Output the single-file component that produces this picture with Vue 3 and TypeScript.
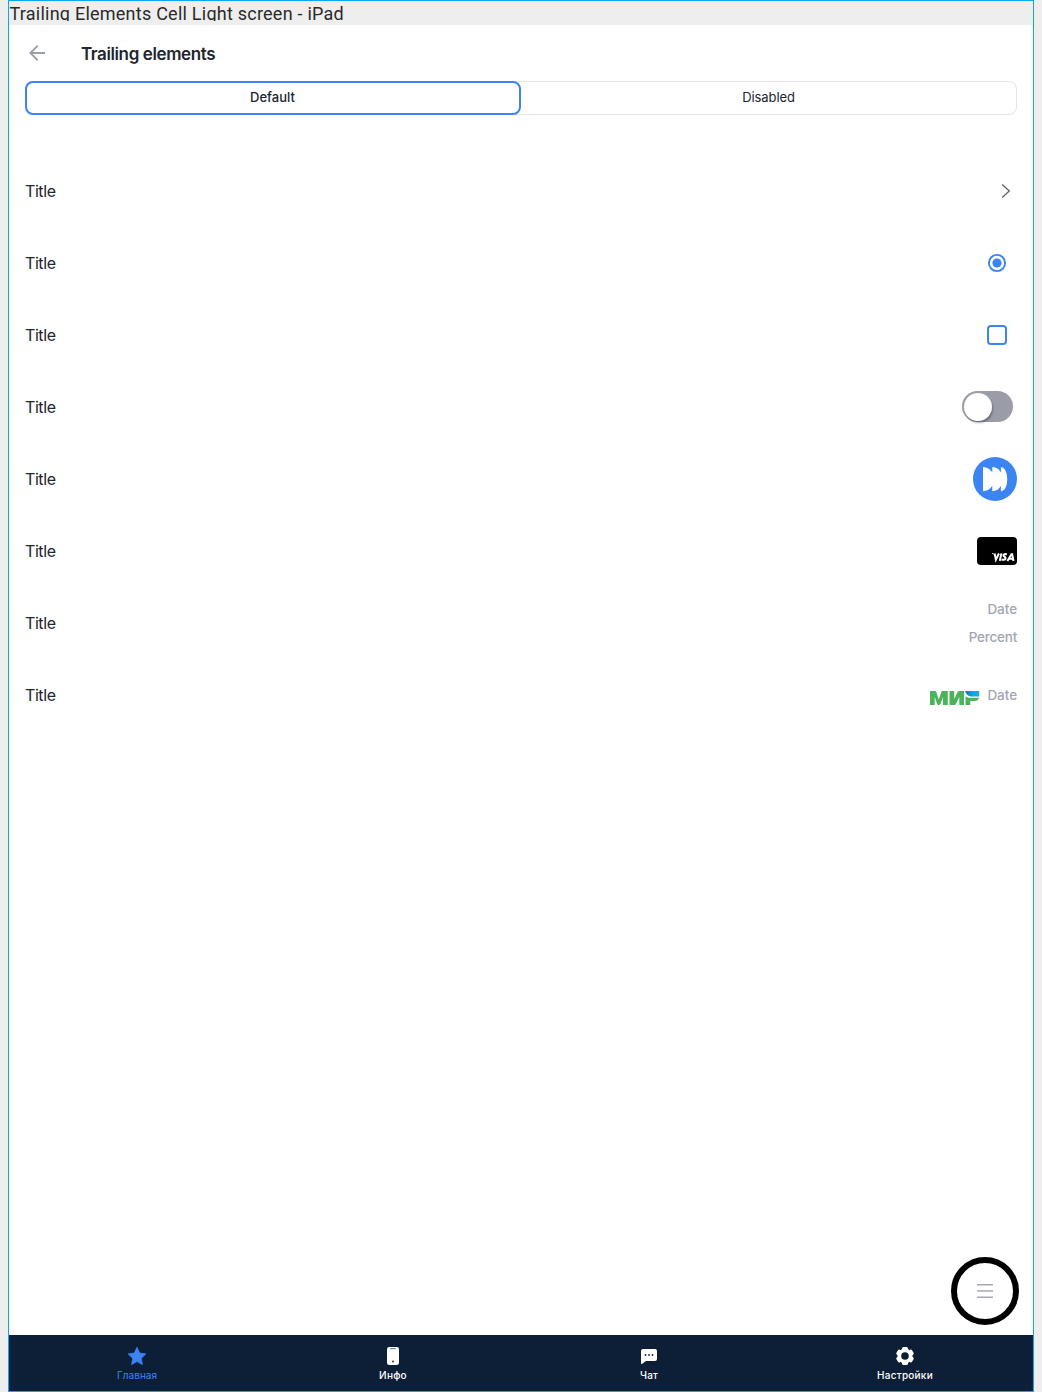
<script setup lang="ts">
type Trailing = 'chevron' | 'radio' | 'checkbox' | 'switch' | 'avatar' | 'visa' | 'labels' | 'mir'

const rows: Trailing[] = ['chevron', 'radio', 'checkbox', 'switch', 'avatar', 'visa', 'labels', 'mir']

const tabs = [
  { id: 'home', label: 'Главная' },
  { id: 'info', label: 'Инфо' },
  { id: 'chat', label: 'Чат' },
  { id: 'settings', label: 'Настройки' },
]

const teeth = [0, 60, 120, 180, 240, 300]
</script>

<template>
  <div class="canvas">
    <div class="frame">
      <div class="caption"><span>Trailing Elements Cell Light screen - iPad</span></div>

      <header class="header">
        <svg class="back" width="24" height="24" viewBox="0 0 24 24">
          <path d="M20 12H5.500M12.700 4.700L5.400 12l7.300 7.300" fill="none" stroke="#9b9eab" stroke-width="1.900" />
        </svg>
        <h1>Trailing elements</h1>
      </header>

      <div class="segmented">
        <button class="segment active">Default</button>
        <button class="segment">Disabled</button>
      </div>

      <main class="list">
        <div v-for="kind in rows" :key="kind" class="row">
          <span class="title">Title</span>

          <svg v-if="kind === 'chevron'" class="chevron" width="10" height="16" viewBox="0 0 10 16">
            <path d="M1.200 1.500L8.300 8l-7.100 6.500" fill="none" stroke="#5d5f6e" stroke-width="1.300" />
          </svg>

          <svg v-else-if="kind === 'radio'" class="radio" width="20" height="20" viewBox="0 0 20 20">
            <circle cx="10" cy="10" r="8.100" fill="none" stroke="#3b84f1" stroke-width="1.900" />
            <circle cx="10" cy="10" r="4.600" fill="#3b84f1" />
          </svg>

          <span v-else-if="kind === 'checkbox'" class="checkbox"></span>

          <span v-else-if="kind === 'switch'" class="switch"><i></i></span>

          <svg v-else-if="kind === 'avatar'" width="44" height="44" viewBox="0 0 44 44">
            <circle cx="22" cy="22" r="22" fill="#3b84f1" />
            <path
              d="M10 10c4 .3 7.300 2 9.300 5.500V10c4 .3 6.800 2 8.600 5.500V10c4.300 .4 6.300 6 6.300 12.200s-2 11.600-6.300 12.100v-5.500c-1.800 3.500-4.600 5.200-8.600 5.500v-5.500c-2 3.500-5.300 5.200-9.300 5.500z"
              fill="#fff"
            />
          </svg>

          <svg v-else-if="kind === 'visa'" width="40" height="28" viewBox="0 0 40 28">
            <rect width="40" height="28" rx="4" fill="#000" />
            <path d="M15 16.400c1 .1 1.800.5 2.300 1.200" fill="none" stroke="#fff" stroke-width="0.800" />
            <g fill="none" stroke="#fff" stroke-width="2">
              <path d="M17.600 16.500l1.300 6.200 3-6.200" />
              <path d="M24.400 16.400l-1.600 7.500" />
              <path d="M29.800 17.500c-1.500-.7-3.400-.4-3.400.8 0 1.400 2.500 1.400 2.200 3.100-.2 1.600-2.500 1.800-4 1" />
              <path d="M30.400 24l4-6.700h.8l1.300 6.700M32.200 21.700h3.700" />
            </g>
          </svg>

          <span v-else-if="kind === 'labels'" class="labels">
            <span>Date</span>
            <span class="percent">Percent</span>
          </span>

          <span v-else class="payment">
            <svg width="50" height="14" viewBox="0 0 50 14">
              <defs>
                <linearGradient id="mir-blue" x1="0" x2="1">
                  <stop offset="0" stop-color="#0c78c2" />
                  <stop offset="0.600" stop-color="#10a9e2" />
                </linearGradient>
              </defs>
              <g fill="#4bb35a">
                <path d="M0 14V0h4.600c.9 0 1.400.4 1.700 1.200L8.800 8.500l2.500-7.300C11.600.4 12.100 0 13 0h4.800v14h-4.800V6l-2.500 6.800c-.3.800-.8 1.200-1.700 1.200s-1.400-.4-1.700-1.200L4.700 6v8z" />
                <path d="M19.500 0h4.700v8l3.300-6.800C27.900.4 28.500 0 29.400 0H34v14h-4.700V6L26 12.800c-.4.800-1 1.200-1.900 1.200h-4.600z" />
                <path d="M35.500 5.200c1 .9 2.600 1.500 4.500 1.500h9.100c-.5 2-2.200 3.300-4.400 3.300h-4.400v4h-4.800z" />
              </g>
              <path d="M35.200 0H49.200V5.600H42.200C38.600 5.600 35.700 3.400 35.200 0z" fill="url(#mir-blue)" />
            </svg>
            <span class="date">Date</span>
          </span>
        </div>
      </main>

      <button class="fab" aria-label="Menu">
        <svg width="16" height="14" viewBox="0 0 16 14">
          <path d="M0 .75h16M0 7h16M0 13.250h16" stroke="#a5a8b3" stroke-width="1.300" />
        </svg>
      </button>

      <nav class="tabbar">
        <a v-for="tab in tabs" :key="tab.id" class="tab" :class="{ current: tab.id === 'home' }">
          <svg width="24" height="24" viewBox="0 0 24 24" fill="currentColor">
            <path
              v-if="tab.id === 'home'"
              d="M12 3.300l2.700 5.800 6.100.8-4.500 4.400 1.100 6.200L12 17.500l-5.400 3 1.100-6.200-4.500-4.400 6.100-.8z"
              stroke="currentColor"
              stroke-width="0.800"
              stroke-linejoin="round"
            />
            <template v-else-if="tab.id === 'info'">
              <rect x="6" y="3" width="12" height="18" rx="2.300" />
              <rect x="9" y="4" width="6" height="1.300" rx="0.600" fill="#7f8998" />
              <circle cx="12" cy="17.500" r="0.900" fill="#0d1f37" />
            </template>
            <template v-else-if="tab.id === 'chat'">
              <path d="M6 5h12a2 2 0 0 1 2 2v8a2 2 0 0 1-2 2H9.200C7.500 17 6.600 20 4 20V7a2 2 0 0 1 2-2z" />
              <g fill="#0d1f37">
                <circle cx="8.500" cy="11" r="0.900" />
                <circle cx="12" cy="11" r="0.900" />
                <circle cx="15.500" cy="11" r="0.900" />
              </g>
            </template>
            <template v-else>
              <circle cx="12" cy="12" r="5.700" fill="none" stroke="currentColor" stroke-width="3.800" />
              <rect
                v-for="angle in teeth"
                :key="angle"
                x="9"
                y="3"
                width="6"
                height="4"
                rx="1.500"
                :transform="`rotate(${angle} 12 12)`"
              />
            </template>
          </svg>
          <span>{{ tab.label }}</span>
        </a>
      </nav>
    </div>
  </div>
</template>

<style>
body {
  margin: 0;
  background: #eee;
}
</style>

<style scoped>
* {
  box-sizing: border-box;
}

.canvas {
  padding: 0 8px;
  font-family: Inter, 'Liberation Sans', sans-serif;
  color: #22242f;
}

.frame {
  position: relative;
  display: flex;
  flex-direction: column;
  height: 1392px;
  border: 1px solid #0aa8ee;
  background: #fff;
}

.caption {
  height: 24px;
  flex: none;
  background: #eee;
}

.caption span {
  display: block;
  height: 20px;
  padding-left: 0.500px;
  overflow: hidden;
  font: 400 18px/26px Roboto, sans-serif;
  letter-spacing: 0.240px;
  white-space: nowrap;
  color: #2a2a2a;
}

.header {
  display: flex;
  align-items: center;
  gap: 32px;
  height: 56px;
  padding: 0 16px;
  flex: none;
}

h1 {
  margin: 2px 0 0;
  font-size: 17px;
  font-weight: 600;
  line-height: 24px;
  letter-spacing: -0.390px;
}

.segmented {
  display: flex;
  flex: none;
  height: 34px;
  margin: 0 16px;
  border-radius: 8px;
  box-shadow: inset 0 0 0 1px #e3e5ee;
}

.segment {
  flex: 1;
  padding: 0 1px 2px 0;
  border: 2px solid transparent;
  border-radius: 8px;
  background: none;
  font: 400 13px/20px Inter, sans-serif;
  letter-spacing: -0.080px;
  color: inherit;
}

.segment.active {
  border-color: #3b84f1;
  background: #fff;
  font-weight: 500;
  letter-spacing: 0;
}

.list {
  flex: 1;
  padding: 40px 16px 0;
}

.row {
  display: flex;
  align-items: center;
  justify-content: space-between;
  height: 72px;
}

.title {
  font-size: 16px;
  line-height: 24px;
  letter-spacing: -0.420px;
}

.chevron {
  margin-right: 6px;
}

.radio {
  margin-right: 10px;
}

.checkbox {
  width: 20px;
  height: 20px;
  margin-right: 10px;
  border: 2px solid #3b84f1;
  border-radius: 4px;
}

.switch {
  width: 51px;
  height: 31px;
  margin: 0 4px 1px 0;
  padding: 1.500px;
  border-radius: 16px;
  background: #9a9da8;
}

.switch i {
  display: block;
  width: 28px;
  height: 28px;
  border-radius: 50%;
  background: #fff;
  box-shadow: 1px 2px 2px rgba(40, 44, 55, 0.4);
}

.labels {
  display: flex;
  flex-direction: column;
  gap: 8px;
  align-items: flex-end;
}

.labels,
.date {
  font-size: 13.500px;
  font-weight: 500;
  line-height: 20px;
  letter-spacing: -0.060px;
  color: #a3a5b2;
}

.percent {
  letter-spacing: -0.230px;
}

.payment {
  display: flex;
  align-items: center;
  justify-content: space-between;
  width: 87px;
}

.payment svg {
  margin-top: 6px;
}

.fab {
  position: absolute;
  right: 14px;
  bottom: 66px;
  display: flex;
  align-items: center;
  justify-content: center;
  width: 68px;
  height: 68px;
  padding: 0;
  border: 6px solid #000;
  border-radius: 50%;
  background: #fff;
}

.tabbar {
  display: flex;
  flex: none;
  height: 56px;
  background: #0d1f37;
}

.tab {
  display: flex;
  flex: 1;
  flex-direction: column;
  align-items: center;
  padding-top: 9px;
  color: #fff;
}

.tab span {
  font-size: 10px;
  font-weight: 500;
  line-height: 14px;
  letter-spacing: 0.240px;
}

.tab.current {
  color: #3b84f1;
}

.tab.current span {
  font-weight: 400;
  letter-spacing: 0.050px;
}
</style>
